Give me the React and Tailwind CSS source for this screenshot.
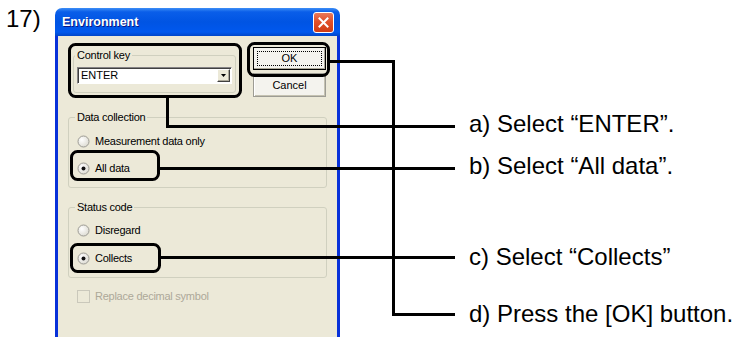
import React from "react";

function Radio({ checked }) {
  return (
    <svg width="13" height="13" viewBox="0 0 13 13" className="shrink-0">
      <defs>
        <radialGradient id="rg" cx="0.35" cy="0.35" r="0.8">
          <stop offset="0" stopColor="#ffffff" />
          <stop offset="1" stopColor="#d8d6cc" />
        </radialGradient>
      </defs>
      <circle cx="6.5" cy="6.5" r="5.5" fill="url(#rg)" stroke="#9c9b94" strokeWidth="1" />
      {checked && <circle cx="6.5" cy="6.5" r="2" fill="#111" />}
    </svg>
  );
}

function RadioRow({ label, checked }) {
  return (
    <div className="flex h-[16px] items-center gap-[5px]">
      <Radio checked={checked} />
      <span className="text-[11px] leading-[14px] tracking-[-0.25px] text-black">{label}</span>
    </div>
  );
}

function Group({ title, className, children }) {
  return (
    <fieldset className={`rounded-[3px] border border-[#d0d0bf] ${className}`}>
      <legend className="-ml-[2px] px-[2px] text-[11px] leading-[14px] tracking-[-0.25px] text-black">
        {title}
      </legend>
      {children}
    </fieldset>
  );
}

function Dialog() {
  return (
    <div className="mt-[8px] flex h-[340px] w-[285px] shrink-0 flex-col">
      {/* title bar */}
      <div className="flex h-[28px] items-center rounded-t-[7px] bg-[linear-gradient(180deg,#3d8ef6_0%,#0a5ee9_14%,#0054e3_50%,#0058ee_86%,#0046c8_100%)] pl-[7px] pr-[6px]">
        <span className="text-[12.5px] font-bold text-white [text-shadow:1px_1px_0_#0a1883]">
          Environment
        </span>
        <div className="ml-auto flex h-[21px] w-[21px] items-center justify-center rounded-[3px] border border-white bg-[linear-gradient(180deg,#e9795a_0%,#e0502a_45%,#cf3c14_100%)]">
          <svg width="11" height="11" viewBox="0 0 11 11">
            <path d="M1.5 1.5 L9.5 9.5 M9.5 1.5 L1.5 9.5" stroke="#fff" strokeWidth="2" strokeLinecap="square" />
          </svg>
        </div>
      </div>

      {/* body */}
      <div className="flex flex-1 flex-col border-x-[3px] border-[#0831d9] bg-[#ece9d8]">
        <div className="flex h-[61px] items-start">
          <Group title="Control key" className="ml-[15px] mt-[12px] w-[163px] pb-[8px] pl-[3px] pt-[5px]">
            <div className="flex h-[17px] w-[155px] items-center border border-t-[#848284] border-l-[#848284] border-b-white border-r-white bg-white shadow-[inset_1px_1px_0_#404040]">
              <span className="pl-[3px] text-[11px] leading-none text-black">ENTER</span>
              <div className="ml-auto mr-px flex h-[13px] w-[13px] items-center justify-center border border-t-white border-l-white border-b-[#404040] border-r-[#404040] bg-[#ece9d8] shadow-[inset_-1px_-1px_0_#aca899]">
                <svg width="5" height="3" viewBox="0 0 5 3">
                  <path d="M0 0 H5 L2.5 3 Z" fill="#000" />
                </svg>
              </div>
            </div>
          </Group>

          <div className="ml-[17px] mt-[11px] flex w-[73px] flex-col gap-[3px]">
            <button className="flex h-[23px] items-center justify-center border border-black bg-[#f4f3ee] p-[3px] shadow-[inset_-1px_-1px_0_#aca899]">
              <div className="flex h-full w-full items-center justify-center border border-dotted border-black text-[11px] leading-none text-black">
                OK
              </div>
            </button>
            <button className="flex h-[24px] items-center justify-center border border-[#9d9c94] bg-[#f4f3ee] text-[11px] leading-none text-black shadow-[inset_1px_1px_0_#fff,inset_-1px_-1px_0_#c5c2b2]">
              Cancel
            </button>
          </div>
        </div>

        <Group title="Data collection" className="ml-[10px] mt-[13px] w-[259px] pb-[11px] pl-[8px] pt-[9px]">
          <div className="flex flex-col gap-[11px]">
            <RadioRow label="Measurement data only" />
            <RadioRow label="All data" checked />
          </div>
        </Group>

        <Group title="Status code" className="ml-[10px] mt-[12px] w-[259px] pb-[11px] pl-[8px] pt-[8px]">
          <div className="flex flex-col gap-[12px]">
            <RadioRow label="Disregard" />
            <RadioRow label="Collects" checked />
          </div>
        </Group>

        <div className="ml-[19px] mt-[10px] flex h-[16px] items-center gap-[5px]">
          <div className="h-[13px] w-[13px] border border-[#cac8bb]" />
          <span className="text-[11px] leading-[14px] tracking-[-0.25px] text-[#aca899]">
            Replace decimal symbol
          </span>
        </div>
      </div>
    </div>
  );
}

export default function App() {
  const notes = [
    { text: "a) Select \u201CENTER\u201D.", cls: "" },
    { text: "b) Select \u201CAll data\u201D.", cls: "mt-[2px]" },
    { text: "c) Select \u201CCollects\u201D", cls: "mt-[51px]" },
    { text: "d) Press the [OK] button.", cls: "mt-[17px]" },
  ];

  return (
    <div className="relative flex h-[337px] w-[742px] overflow-hidden bg-white font-['Liberation_Sans',Arial,sans-serif] text-black">
      <div className="w-[55px] shrink-0 pl-[6px] pt-[7px] text-[24px] leading-none">17)</div>

      <Dialog />

      <div className="flex flex-col pl-[129px] pt-[104px]">
        {notes.map((n) => (
          <div key={n.text} className={`h-[40px] whitespace-nowrap text-[24px] leading-[40px] ${n.cls}`}>
            {n.text}
          </div>
        ))}
      </div>

      {/* callout lines and highlight frames */}
      <svg className="pointer-events-none absolute inset-0" width="742" height="337" viewBox="0 0 742 337">
        <g fill="none" stroke="#000" strokeWidth="3">
          <rect x="69.5" y="44.5" width="171" height="52" rx="6" />
          <rect x="248.5" y="43.5" width="80" height="32" rx="6" />
          <rect x="71.5" y="151.5" width="87" height="28" rx="6" />
          <rect x="71.5" y="244.5" width="88" height="27" rx="6" />
          <polyline points="330,61.5 393.5,61.5 393.5,314.5 455,314.5" />
          <polyline points="167.5,98 167.5,126.5 455,126.5" />
          <line x1="160" y1="168.5" x2="455" y2="168.5" />
          <line x1="161" y1="257.5" x2="455" y2="257.5" />
        </g>
      </svg>
    </div>
  );
}
